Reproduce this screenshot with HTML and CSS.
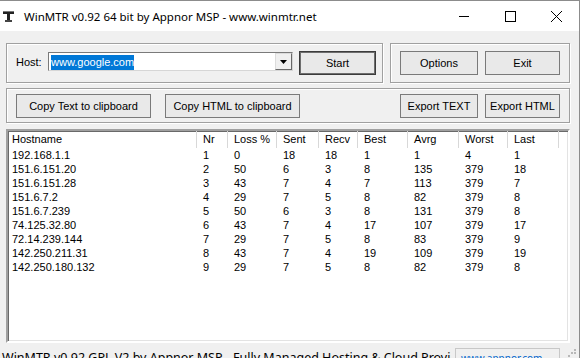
FILE: index.html
```html
<!DOCTYPE html>
<html>
<head>
    <meta charset="UTF-8">
    <title>WinMTR</title>
    <link rel="stylesheet" href="styles.css">
</head>
<body>
    <div class="window">
        <div class="titlebar">
            <svg class="app-icon" width="12" height="12" viewBox="0 0 12 12">
                <rect x="0" y="0" width="11" height="3" fill="#222"/>
                <rect x="0" y="0" width="11" height="1" fill="#777"/>
                <rect x="4" y="3" width="3" height="6" fill="#222"/>
                <rect x="2" y="9" width="7" height="2" fill="#444"/>
            </svg>
            <span class="title">WinMTR v0.92 64 bit by Appnor MSP - www.winmtr.net</span>
            <div class="caption-buttons">
                <span class="cap-btn">
                    <svg width="11" height="11" viewBox="0 0 11 11"><path d="M0 5.5H10" stroke="#000" stroke-width="1"/></svg>
                </span>
                <span class="cap-btn">
                    <svg width="11" height="11" viewBox="0 0 11 11"><rect x="0.5" y="0.5" width="10" height="10" fill="none" stroke="#000" stroke-width="1"/></svg>
                </span>
                <span class="cap-btn">
                    <svg width="11" height="11" viewBox="0 0 11 11"><path d="M0 0L11 11M11 0L0 11" stroke="#000" stroke-width="1"/></svg>
                </span>
            </div>
        </div>

        <div class="client">
            <div class="top-row">
                <div class="group host-group">
                    <span class="host-label">Host:</span>
                    <div class="combo">
                        <span class="combo-text"><span class="selected">www.google.com</span></span>
                        <span class="combo-drop">
                            <svg width="7" height="4" viewBox="0 0 7 4"><path d="M0 0H7L3.5 4Z" fill="#000"/></svg>
                        </span>
                    </div>
                    <button class="btn btn-default start-btn">Start</button>
                </div>
                <div class="group options-group">
                    <button class="btn btn-options">Options</button>
                    <button class="btn btn-exit">Exit</button>
                </div>
            </div>

            <div class="group export-group">
                <button class="btn btn-copy">Copy Text to clipboard</button>
                <button class="btn btn-copy">Copy HTML to clipboard</button>
                <span class="spacer"></span>
                <button class="btn btn-options">Export TEXT</button>
                <button class="btn btn-exit">Export HTML</button>
            </div>

            <div class="list">
                <div class="list-row list-head">
                    <span>Hostname</span><span>Nr</span><span>Loss %</span><span>Sent</span><span>Recv</span><span>Best</span><span>Avrg</span><span>Worst</span><span>Last</span>
                </div>
                <div class="list-row"><span>192.168.1.1</span><span>1</span><span>0</span><span>18</span><span>18</span><span>1</span><span>1</span><span>4</span><span>1</span></div>
                <div class="list-row"><span>151.6.151.20</span><span>2</span><span>50</span><span>6</span><span>3</span><span>8</span><span>135</span><span>379</span><span>18</span></div>
                <div class="list-row"><span>151.6.151.28</span><span>3</span><span>43</span><span>7</span><span>4</span><span>7</span><span>113</span><span>379</span><span>7</span></div>
                <div class="list-row"><span>151.6.7.2</span><span>4</span><span>29</span><span>7</span><span>5</span><span>8</span><span>82</span><span>379</span><span>8</span></div>
                <div class="list-row"><span>151.6.7.239</span><span>5</span><span>50</span><span>6</span><span>3</span><span>8</span><span>131</span><span>379</span><span>8</span></div>
                <div class="list-row"><span>74.125.32.80</span><span>6</span><span>43</span><span>7</span><span>4</span><span>17</span><span>107</span><span>379</span><span>17</span></div>
                <div class="list-row"><span>72.14.239.144</span><span>7</span><span>29</span><span>7</span><span>5</span><span>8</span><span>83</span><span>379</span><span>9</span></div>
                <div class="list-row"><span>142.250.211.31</span><span>8</span><span>43</span><span>7</span><span>4</span><span>19</span><span>109</span><span>379</span><span>19</span></div>
                <div class="list-row"><span>142.250.180.132</span><span>9</span><span>29</span><span>7</span><span>5</span><span>8</span><span>82</span><span>379</span><span>8</span></div>
            </div>

            <div class="statusbar">
                <div class="status-text">WinMTR v0.92 GPL V2 by Appnor MSP - Fully Managed Hosting &amp; Cloud Provi</div>
                <div class="status-link">www.appnor.com</div>
                <div class="size-grip">
                    <svg width="12" height="12" viewBox="0 0 12 12">
                        <rect x="9" y="1" width="2" height="2" fill="#b8b8b8"/>
                        <rect x="6" y="4" width="2" height="2" fill="#b8b8b8"/>
                        <rect x="9" y="4" width="2" height="2" fill="#b8b8b8"/>
                        <rect x="3" y="7" width="2" height="2" fill="#b8b8b8"/>
                    </svg>
                </div>
            </div>
        </div>
    </div>
</body>
</html>
```

FILE: styles.css
```css
* {
    box-sizing: border-box;
    margin: 0;
    padding: 0;
}
body {
    width: 584px;
    height: 358px;
    overflow: hidden;
    background-color: #fff;
    font-family: "Liberation Sans", Arial, sans-serif;
    font-size: 11px;
    color: #000;
}
.window {
    width: 580px;
    height: 358px;
    border-top: 1px solid #8c8c8c;
    border-right: 1px solid #8c8c8c;
    overflow: hidden;
}

/* title bar */
.titlebar {
    height: 30px;
    background-color: #fff;
    display: flex;
    align-items: center;
}
.app-icon {
    margin-left: 3px;
    margin-right: 9px;
    margin-top: 1px;
}
.title {
    font-family: "Noto Sans", sans-serif;
    font-size: 11.5px;
    color: #000;
}
.caption-buttons {
    margin-left: auto;
    display: flex;
}
.cap-btn {
    width: 46px;
    height: 30px;
    display: flex;
    align-items: center;
    justify-content: center;
}

/* client area */
.client {
    background-color: #f0f0f0;
    height: 327px;
    padding: 12px 9px 0 6px;
}
.top-row {
    display: flex;
    gap: 7px;
}
.group {
    border: 1px solid #a0a0a0;
    box-shadow: inset 1px 1px 0 #fff, 1px 1px 0 #fff;
    display: flex;
}
.host-group {
    width: 377px;
    height: 40px;
    align-items: center;
    padding-left: 9px;
}
.host-label {
    width: 32px;
    margin-top: -2px;
}
.combo {
    width: 245px;
    height: 19px;
    margin-top: -3px;
    background-color: #fff;
    border: 1px solid #7a7a7a;
    border-right-color: #d6d6d6;
    border-bottom-color: #d6d6d6;
    display: flex;
    align-items: center;
}
.combo-text {
    flex: 1;
    padding-left: 2px;
}
.selected {
    background-color: #0078d7;
    color: #fff;
    padding: 1px 0 2px;
}
.combo-drop {
    width: 17px;
    height: 17px;
    background-color: #f0f0f0;
    border: 1px solid #dcdcdc;
    border-right-color: #696969;
    border-bottom-color: #696969;
    display: flex;
    align-items: center;
    justify-content: center;
}
.btn {
    height: 24px;
    font-family: "Liberation Sans", Arial, sans-serif;
    font-size: 11px;
    color: #000;
    background-color: #e9e9e9;
    border: 1px solid #7a7a7a;
}
.btn-default {
    border-color: #3c3c3c;
    box-shadow: inset 0 0 0 1px #6e6e6e;
}
.start-btn {
    width: 77px;
    margin-left: 6px;
}
.options-group {
    width: 180px;
    height: 40px;
    align-items: center;
    padding-left: 9px;
    gap: 7px;
}
.btn-options {
    width: 78px;
}
.btn-exit {
    width: 75px;
}
.export-group {
    margin-top: 5px;
    height: 35px;
    align-items: center;
    padding: 0 9px;
    gap: 7px;
}
.btn-copy {
    width: 135px;
}
.btn-copy + .btn-copy {
    margin-left: 7px;
}
.spacer {
    flex: 1;
}

/* list view */
.list {
    margin-top: 6px;
    height: 214px;
    background-color: #fff;
    border: 2px solid;
    border-color: #a0a0a0 #fff #fff #a0a0a0;
    box-shadow: inset 1px 1px 0 #696969, inset -1px -1px 0 #e3e3e3;
}
.list-row {
    display: grid;
    grid-template-columns: 189px 31px 49px 42px 39px 50px 51px 49px 51px;
    height: 14px;
    line-height: 14px;
    white-space: nowrap;
}
.list-row span {
    padding-left: 6px;
}
.list-row span:first-child {
    padding-left: 4px;
}
.list-head {
    height: 17px;
    line-height: 17px;
}
.list-head span {
    border-right: 1px solid #d8d8d8;
}

/* status bar */
.statusbar {
    margin: 5px -9px 0 -6px;
    display: flex;
    font-family: "Noto Sans", sans-serif;
    font-size: 12.5px;
    line-height: 16px;
}
.status-text {
    width: 455px;
    padding: 2px 0 0 2px;
    white-space: nowrap;
    overflow: hidden;
}
.status-link {
    width: 105px;
    border: 1px solid #c8c8c8;
    border-bottom: none;
    padding: 1px 0 0 5px;
    color: #0066cc;
    font-size: 10px;
}
.size-grip {
    flex: 1;
    display: flex;
    justify-content: flex-end;
    padding-right: 2px;
}
```
